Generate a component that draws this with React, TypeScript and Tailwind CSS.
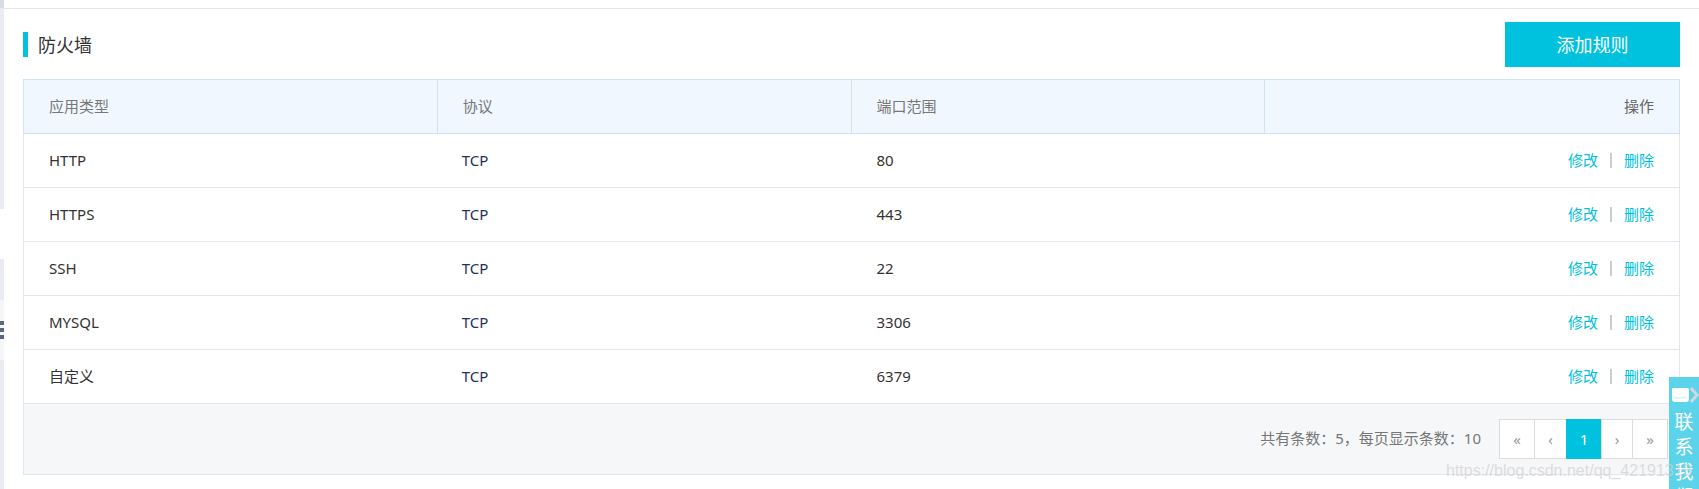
import React from "react";

const rows = [
  { app: "HTTP", port: "80" },
  { app: "HTTPS", port: "443" },
  { app: "SSH", port: "22" },
  { app: "MYSQL", port: "3306" },
  { app: "自定义", port: "6379" },
];

const pages = [
  { label: "«", width: "w-[36px]" },
  { label: "‹", width: "w-[33px]" },
  { label: "1", width: "w-[36px]", active: true },
  { label: "›", width: "w-[32px]" },
  { label: "»", width: "w-[36px]" },
];

const font = "font-['Noto_Sans','Noto_Sans_CJK_SC',sans-serif]";

export default function App() {
  return (
    <div className={`${font} relative w-[1699px] h-[489px] overflow-hidden bg-white flex`}>
      {/* Left rail, cut off by the crop */}
      <div className="w-[4px] flex flex-col shrink-0">
        <div className="h-[8px] bg-[#d9dce3]" />
        <div className="h-[201px] bg-[#e9ecf3]" />
        <div className="h-[50px] bg-white" />
        <div className="h-[41px] bg-[#e9ecf3]" />
        <div className="h-[60px] bg-[#f5f6f8] flex flex-col justify-center gap-[3px]">
          <div className="h-[4px] bg-[#5b6680]" />
          <div className="h-[4px] bg-[#5b6680]" />
          <div className="h-[4px] bg-[#5b6680]" />
        </div>
        <div className="flex-1 bg-[#e9ecf3]" />
      </div>

      <div className="flex-1 min-w-0">
        <div className="h-[9px] border-b border-[#e3e6ec]" />

        {/* Title row */}
        <div className="h-[70px] px-[19px] flex items-start justify-between">
          <div className="mt-[23px] h-[25px] flex items-center border-l-[5px] border-[#00c1de] pl-[10px] pt-[1px] text-[18px] text-[#333]">
            防火墙
          </div>
          <div className="mt-[13px] w-[175px] h-[45px] pt-[1px] bg-[#00c1de] text-white text-[18px] flex items-center justify-center">
            添加规则
          </div>
        </div>

        {/* Table */}
        <div className="mx-[19px] text-[15px]">
          <div className="h-[55px] grid grid-cols-4 bg-[#f0f7fe] border border-[#cfe2f6] text-[#777]">
            <div className="pl-[25px] flex items-center border-r border-[#cfe2f6]">应用类型</div>
            <div className="pl-[25px] flex items-center border-r border-[#cfe2f6]">协议</div>
            <div className="pl-[25px] flex items-center border-r border-[#cfe2f6]">端口范围</div>
            <div className="pr-[25px] flex items-center justify-end text-[#666]">操作</div>
          </div>
          {rows.map((row) => (
            <div key={row.app} className="h-[54px] grid grid-cols-4 border-x border-b border-[#e3e6ec] text-[#333]">
              <div className="pl-[25px] flex items-center">{row.app}</div>
              <div className="pl-[24px] flex items-center text-[#263159]">TCP</div>
              <div className="pl-[25px] flex items-center">{row.port}</div>
              <div className="pr-[25px] flex items-center justify-end text-[#00c1de]">
                <span>修改</span>
                <span className="mx-[12px] w-[2px] h-[15px] bg-[#c8ced6]" />
                <span>删除</span>
              </div>
            </div>
          ))}
          <div className="h-[71px] bg-[#f6f7f9] border-x border-b border-[#e3e6ec] flex items-center justify-end pr-[11px] text-[#777]">
            <span className="mr-[18px] mb-[1px]">共有条数：5，每页显示条数：10</span>
            <div className="flex">
              {pages.map((page) => (
                <div
                  key={page.label}
                  className={
                    page.active
                      ? `${page.width} h-[40px] -ml-px flex items-center justify-center bg-[#00c1de] text-white text-[15px]`
                      : `${page.width} h-[40px] -ml-px first:ml-0 flex items-center justify-center bg-white border border-[#dcdcdc] text-[#999] text-[15px]`
                  }
                >
                  {page.label}
                </div>
              ))}
            </div>
          </div>
        </div>
      </div>

      {/* Floating contact tab */}
      <div className="absolute left-[1669px] top-[377px] w-[30px] h-[112px] bg-[#5bd3ea] text-white text-[19px] leading-[25px] flex flex-col items-center overflow-hidden">
        <svg width="30" height="33" viewBox="0 0 30 33" className="shrink-0">
          <path d="M4 11h14a2 2 0 0 1 2 2v9a3 3 0 0 1-3 3H6a3 3 0 0 1-3-3V12z" fill="#fff" />
          <path d="M4 21q7 1 13-1" fill="none" stroke="#bfeef7" strokeWidth="1" />
          <path d="M22 11l6 7-6 7" fill="none" stroke="#d3d8da" strokeWidth="3" />
        </svg>
        <span>联</span>
        <span>系</span>
        <span>我</span>
        <span>们</span>
      </div>

      {/* CSDN watermark */}
      <div className="absolute left-[1446px] top-[459px] text-[16px] font-['Liberation_Sans',sans-serif] text-[#cfcfcf]/70 whitespace-nowrap">
        https://blog.csdn.net/qq_42191313
      </div>
    </div>
  );
}
